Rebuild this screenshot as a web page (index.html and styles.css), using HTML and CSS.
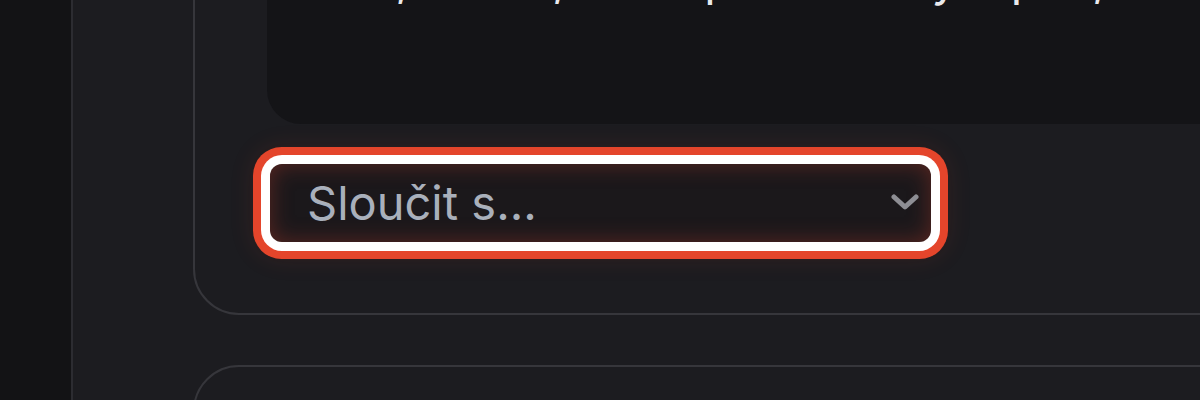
FILE: index.html
```html
<!DOCTYPE html>
<html lang="cs">
<head>
<meta charset="utf-8">
<title>Sloučit</title>
<link rel="stylesheet" href="styles.css">
</head>
<body>
<div class="app">
  <aside class="rail"></aside>
  <main class="main">
    <section class="card card-first">
      <div class="preview">
        <p class="preview-text">Ano, dobře, nebo pak celé vy a pak, dál</p>
      </div>
      <div class="select" role="combobox" aria-expanded="false" tabindex="0">
        <span class="select-label">Sloučit s...</span>
        <svg class="chevron" width="28" height="18" viewBox="0 0 28 18" aria-hidden="true">
          <path d="M3 3 L14 13 L25 3" fill="none" stroke="#8e8e94" stroke-width="5" stroke-linecap="round" stroke-linejoin="round"/>
        </svg>
      </div>
    </section>
    <section class="card card-second"></section>
  </main>
</div>
</body>
</html>
```
FILE: styles.css
```css
html, body {
  margin: 0;
  padding: 0;
  height: 400px;
  overflow: hidden;
  background: #1c1c20;
  font-family: Inter, "Noto Sans", "Liberation Sans", sans-serif;
}

.app {
  display: flex;
  height: 400px;
}

.rail {
  width: 71px;
  flex: none;
  background: #131315;
  border-right: 2px solid #2c2c31;
}

.main {
  flex: 1;
  overflow: hidden;
  padding-left: 120px;
  display: flex;
  flex-direction: column;
  gap: 50px;
}

.card {
  width: 1100px;
  flex: none;
  border: 2px solid #36363b;
  border-radius: 46px;
  box-sizing: border-box;
}

.card-first {
  margin-top: -80px;
  padding: 0 0 71px 72px;
  display: flex;
  flex-direction: column;
  gap: 40px;
}

.card-second {
  height: 200px;
}

.preview {
  height: 202px;
  background: #141417;
  border-radius: 0 0 0 34px;
  box-sizing: border-box;
  padding: 29px 0 0 40px;
  overflow: hidden;
}

.preview-text {
  margin: 0;
  color: #e9e9ec;
  font-size: 47px;
  line-height: 56px;
  white-space: nowrap;
}

.select {
  margin-left: 3px;
  width: 661px;
  height: 78px;
  box-sizing: border-box;
  border-radius: 12px;
  background: #1b181b;
  box-shadow:
    inset 0 0 22px rgba(170, 55, 40, 0.45),
    0 0 0 9px #ffffff,
    0 0 0 17px #e4452b,
    0 0 24px 18px rgba(228, 69, 43, 0.10);
  display: flex;
  align-items: center;
  justify-content: space-between;
  padding: 0 12px 0 37px;
  outline: none;
}

.select-label {
  color: #a9b0bb;
  font-size: 47px;
  line-height: 56px;
  margin-top: -1px;
}

.chevron {
  display: block;
}
```
